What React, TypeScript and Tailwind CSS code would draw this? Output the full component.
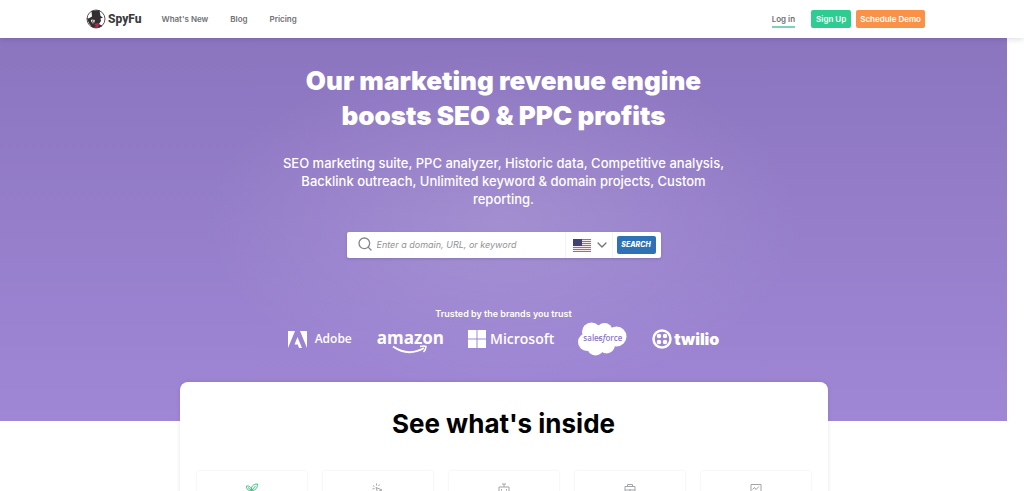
import React, { useState } from 'react';
import { ChevronDown, Search } from 'lucide-react';

const navLinks = ["What's New", 'Blog', 'Pricing'];

const Logo = () => (
  <a href="#" aria-label="SpyFu home" className="flex items-center gap-[2px]">
    <svg viewBox="0 0 40 40" className="h-5 w-5">
      <circle cx="20" cy="20" r="18" fill="#fff" stroke="#5a5658" strokeWidth="2" />
      <path d="M11 4 L27 2 L29 14 L34 17 L29 19 L30 24 L26 30 L33 34 Q20 42 9 34 L15 29 Q11 26 12 22 L5 19 L12 15 Z" fill="#332f31" />
      <path d="M2 18 Q5 31 14 36 L16 30 Q9 27 10 20 Z" fill="#332f31" />
      <path d="M12 21 L18 22 L17 27 L14 27 Z" fill="#c9c4c6" />
      <path d="M15 30 L24 28 L27 31 L23 38 L16 37 L20 33 Z" fill="#a92b50" />
    </svg>
    <span className="font-[Roboto,sans-serif] text-[12px] leading-5 font-extrabold text-[#3a3a3c]">SpyFu</span>
  </a>
);

const Header = () => (
  <header className="relative z-10 bg-white shadow-[0_1px_6px_rgba(0,0,0,0.15)]">
    <div className="mr-[17px] flex h-[38px] items-center justify-between pr-[82px] pl-[86px] text-[8px] font-semibold text-[#6f7074]">
      <div className="flex items-center gap-5">
        <Logo />
        <nav className="flex gap-[22px]">
          {navLinks.map((link) => (
            <a key={link} href="#">{link}</a>
          ))}
        </nav>
      </div>
      <div className="flex items-center">
        <a href="#" className="mt-[2px] mr-4 border-b-2 border-[#7bd3b4] leading-[14px]">Log in</a>
        <button type="button" className="mr-[5px] h-[18px] rounded-xs bg-[#2fcc91] px-[5px] text-white">Sign Up</button>
        <button type="button" className="h-[18px] rounded-xs bg-[#f99248] px-1 text-white">Schedule Demo</button>
      </div>
    </div>
  </header>
);

const UsFlag = () => (
  <svg viewBox="0 0 18 13" className="h-[13px] w-[18px] shrink-0">
    <rect width="18" height="13" fill="#f4e9ec" />
    {[0, 2, 4, 6, 8, 10, 12].map((y) => (
      <rect key={y} y={y} width="18" height="1" fill="#cf5a68" />
    ))}
    <rect width="9" height="7" fill="#3f4173" />
  </svg>
);

const SearchBar = () => {
  const [query, setQuery] = useState('');

  return (
    <form
      role="search"
      onSubmit={(e) => e.preventDefault()}
      className="mx-auto flex h-[26px] w-[314px] items-stretch rounded-xs bg-white shadow-[0_1px_3px_rgba(0,0,0,0.15)]"
    >
      <label htmlFor="domain" aria-label="Domain, URL, or keyword" className="flex items-center pl-[10px]">
        <Search className="mb-[3px] h-4 w-4 text-[#85868a]" strokeWidth={2} />
      </label>
      <input
        id="domain"
        value={query}
        onChange={(e) => setQuery(e.target.value)}
        placeholder="Enter a domain, URL, or keyword"
        className="min-w-0 flex-1 pl-1 text-[9px] italic outline-none placeholder:text-[#929397]"
      />
      <button type="button" aria-label="Country: United States" className="flex w-12 items-center justify-end gap-[3px] border-x border-[#f3f3f5] pr-[2px]">
        <UsFlag />
        <ChevronDown className="h-4 w-4 shrink-0 text-[#737478]" />
      </button>
      <button type="submit" className="m-1 mr-[5px] w-[39px] rounded-xs bg-[#2f71b5] text-[7px] font-extrabold text-white italic">
        SEARCH
      </button>
    </form>
  );
};

const Brands = () => (
  <div className="mt-[2px] flex items-center justify-center text-white">
    <div className="mr-[25px] flex items-center gap-2">
      <svg viewBox="0 0 38 34" className="h-[17px] w-[19px]" fill="#fff">
        <path d="M0 0H14L0 34Z M24 0H38V34Z M19 12L28 34H22L19.500 27H13Z" />
      </svg>
      <span className="font-['Open_Sans',sans-serif] text-[12px] leading-4 font-semibold">Adobe</span>
    </div>
    <div className="mr-6 flex flex-col items-center">
      <span className="mt-[6px] font-['Open_Sans',sans-serif] text-[17px] leading-4 font-bold">amazon</span>
      <svg viewBox="0 0 72 18" className="-mt-px h-[9px] w-9" fill="none" stroke="#fff">
        <path d="M2 3Q32 24 64 6" strokeWidth="4" />
        <path d="M56 3Q64 1 68 3Q68 9 63 14" strokeWidth="3" />
      </svg>
    </div>
    <div className="mr-6 flex items-center gap-1">
      <svg viewBox="0 0 36 36" className="h-[18px] w-[18px]" fill="#fff">
        <path d="M0 0H17V17H0Z M19 0H36V17H19Z M0 19H17V36H0Z M19 19H36V36H19Z" />
      </svg>
      <span className="font-['Open_Sans',sans-serif] text-[14px] leading-5 font-semibold">Microsoft</span>
    </div>
    <div className="mr-[25px] grid h-[34px] w-[49px] place-items-center">
      <svg viewBox="0 0 98 68" className="col-start-1 row-start-1 h-[34px] w-[49px]" fill="#fff">
        <circle cx="27" cy="20" r="19" />
        <circle cx="53" cy="18" r="16" />
        <circle cx="77" cy="29" r="20" />
        <circle cx="18" cy="40" r="18" />
        <circle cx="35" cy="50" r="17" />
        <circle cx="57" cy="46" r="17" />
      </svg>
      <span className="z-10 col-start-1 row-start-1 mb-[3px] font-['Open_Sans',sans-serif] text-[8px] font-semibold text-[#8d79c4]">
        sales<i>f</i>orce
      </span>
    </div>
    <div className="flex items-center gap-[2px]">
      <svg viewBox="0 0 40 40" className="h-5 w-5" fill="#fff">
        <circle cx="20" cy="20" r="17" fill="none" stroke="#fff" strokeWidth="5" />
        <circle cx="14" cy="14" r="4.500" />
        <circle cx="26" cy="14" r="4.500" />
        <circle cx="14" cy="26" r="4.500" />
        <circle cx="26" cy="26" r="4.500" />
      </svg>
      <span className="text-[16px] leading-5 font-black">twilio</span>
    </div>
  </div>
);

const Hero = () => (
  <section className="mr-[17px] h-[383px] bg-[radial-gradient(ellipse_300px_170px_at_50%_48%,rgba(255,255,255,0.13),transparent),linear-gradient(#8c75bf,#9f87d6)] text-center text-white">
    <h1 className="mx-auto w-[440px] pt-[25px] text-[26px] leading-[35px] font-black">
      Our marketing revenue engine boosts SEO &amp; PPC profits
    </h1>
    <p className="mx-auto mt-[21px] w-[446px] text-[13px] leading-[18px] font-medium">
      SEO marketing suite, PPC analyzer, Historic data, Competitive analysis, Backlink outreach, Unlimited keyword &amp; domain projects, Custom reporting.
    </p>
    <div className="mt-6">
      <SearchBar />
    </div>
    <p className="mt-[50px] text-[9px] leading-3 font-semibold">Trusted by the brands you trust</p>
    <Brands />
  </section>
);

const features = [
  {
    name: 'Growth',
    color: 'text-[#44bd83]',
    path: 'M11 24V15 M11 15C5 16 1 13 1 6C7 5 11 9 11 15Z M11 15C10 7 14 2 23 2C23 10 19 15 11 15Z M4 9L11 15L19 6',
  },
  {
    name: 'Clicks',
    color: 'text-[#a2a4a7]',
    path: 'M8 9L20 14L15 16L22 22 M8 9L12 20L14 16 M2 5L5 7 M9 1V5 M15 3L13 6 M1 12L5 11',
  },
  {
    name: 'Tracking',
    color: 'text-[#a2a4a7]',
    path: 'M2 8H22V19H2Z M12 8V2 M8 2H16 M7 12V15 M17 12V15 M5 19V23H19V19',
  },
  {
    name: 'Business',
    color: 'text-[#a2a4a7]',
    path: 'M2 7H22V21H2Z M7 7V3H17V7 M2 14H22 M12 12V16',
  },
  {
    name: 'Reports',
    color: 'text-[#a2a4a7]',
    path: 'M2 3H22V22H2Z M5 13L9 9L12 13L18 7 M6 18H18',
  },
];

const Inside = () => (
  <section className="relative mr-[17px] -mt-[39px]">
    <div className="mx-auto w-full max-w-[648px] rounded-t-lg bg-white px-[17px] pt-6 shadow-[0_0_4px_rgba(0,0,0,0.10)]">
      <h2 className="text-center text-[26px] leading-9 font-bold text-black">See what's inside</h2>
      <div className="mt-[29px] grid grid-cols-5 gap-4 pb-10">
        {features.map((feature) => (
          <button
            key={feature.name}
            type="button"
            aria-label={feature.name}
            className="flex h-20 justify-center rounded-xs pt-3 shadow-[0_0_3px_rgba(0,0,0,0.08)]"
          >
            <svg viewBox="0 0 24 24" className={`h-3 w-3 ${feature.color}`} fill="none" stroke="currentColor" strokeWidth="2">
              <path d={feature.path} />
            </svg>
          </button>
        ))}
      </div>
    </div>
  </section>
);

const App = () => (
  <div className="h-screen overflow-hidden bg-white font-[Inter,sans-serif]">
    <Header />
    <main>
      <Hero />
      <Inside />
    </main>
  </div>
);

export default App;
